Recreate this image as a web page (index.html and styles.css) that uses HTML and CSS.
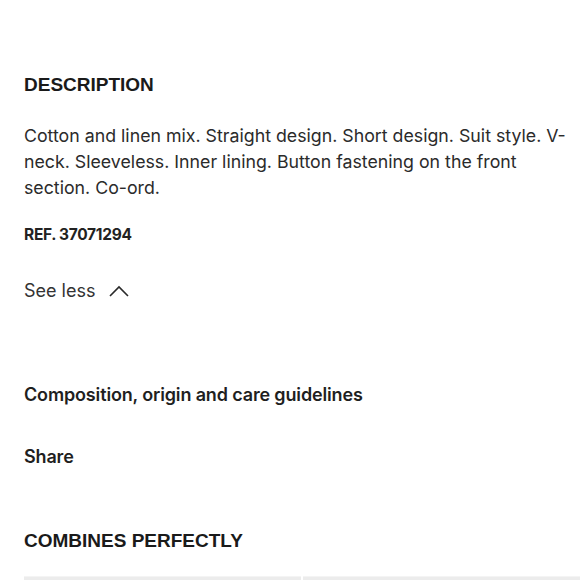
FILE: index.html
```html
<!DOCTYPE html>
<html lang="en">
<head>
<meta charset="utf-8">
<link rel="stylesheet" href="styles.css">
</head>
<body>
<main class="page">
  <section class="desc">
    <h2 class="section-title">DESCRIPTION</h2>
    <p class="desc-text">Cotton and linen mix. Straight design. Short design. Suit style. V-neck. Sleeveless. Inner lining. Button fastening on the front section. Co-ord.</p>
    <p class="ref">REF. 37071294</p>
    <button class="toggle" type="button">See less
      <svg class="chev" width="20" height="12" viewBox="0 0 20 12"><path d="M1 11 L10 2 L19 11" fill="none" stroke="#2a2a2a" stroke-width="1.6"/></svg>
    </button>
  </section>
  <section class="links">
    <div class="link-item">Composition, origin and care guidelines</div>
    <div class="link-item">Share</div>
  </section>
  <section class="combines">
    <h2 class="section-title">COMBINES PERFECTLY</h2>
    <div class="products">
      <div class="product"></div>
      <div class="product"></div>
    </div>
  </section>
</main>
</body>
</html>
```
FILE: styles.css
```css
* { box-sizing: border-box; }
html, body { margin: 0; padding: 0; background: #fff; }
body { font-family: Inter, "Liberation Sans", sans-serif; color: #222; }
.page { padding: 0 0 0 24px; }
.desc { padding-top: 74px; padding-right: 8px; }
.section-title {
  font-family: "Liberation Sans", Arial, sans-serif;
  font-weight: 700;
  font-size: 19px;
  line-height: 22px;
  margin: 0;
  color: #1a1a1a;
}
.desc-text {
  margin: 27px 0 0;
  font-size: 17.75px;
  line-height: 26px;
  color: #2b2b2b;
}
.ref {
  margin: 24px 0 0;
  font-size: 15.5px;
  font-weight: 700;
  line-height: 20px;
  letter-spacing: -0.3px;
}
.toggle {
  margin-top: 34px;
  padding: 0;
  border: 0;
  background: none;
  font-family: inherit;
  font-size: 18px;
  color: #333;
  display: flex;
  align-items: center;
  gap: 14px;
  line-height: 24px;
}
.links { padding-top: 80px; display: flex; flex-direction: column; gap: 38px; }
.link-item { font-size: 18px; font-weight: 600; line-height: 24px; color: #1f1f1f; letter-spacing: -0.15px; }
.combines { padding-top: 61px; }
.products { margin-top: 24px; display: grid; grid-template-columns: 277px 277px; gap: 2px; }
.product { height: 200px; background: #ececec; border-top: 1px solid #f4f4f4; }
```
